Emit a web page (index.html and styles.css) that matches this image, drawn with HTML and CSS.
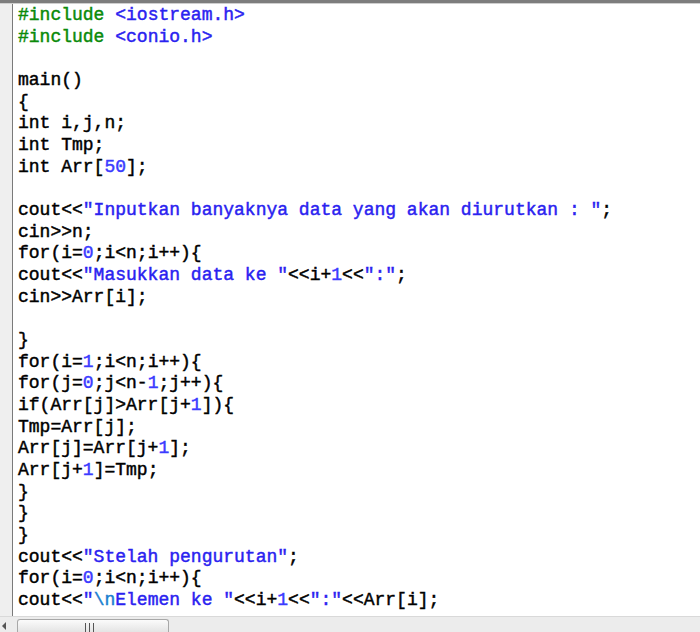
FILE: index.html
```html
<!DOCTYPE html>
<html lang="en">
<head>
    <meta charset="UTF-8">
    <title>sort.cpp</title>
    <link rel="stylesheet" href="styles.css">
</head>
<body>
    <div class="window">
        <div class="top-bar"></div>
        <div class="editor">
            <div class="gutter"></div>
            <pre class="code"><span class="pp">#include</span><span class="str"> &lt;iostream.h&gt;</span>
<span class="pp">#include</span><span class="str"> &lt;conio.h&gt;</span>

main()
{
int i,j,n;
int Tmp;
int Arr[<span class="num">50</span>];

cout&lt;&lt;<span class="str">"Inputkan banyaknya data yang akan diurutkan : "</span>;
cin&gt;&gt;n;
for(i=<span class="num">0</span>;i&lt;n;i++){
cout&lt;&lt;<span class="str">"Masukkan data ke "</span>&lt;&lt;i+<span class="num">1</span>&lt;&lt;<span class="str">":"</span>;
cin&gt;&gt;Arr[i];

}
for(i=<span class="num">1</span>;i&lt;n;i++){
for(j=<span class="num">0</span>;j&lt;n-<span class="num">1</span>;j++){
if(Arr[j]&gt;Arr[j+<span class="num">1</span>]){
Tmp=Arr[j];
Arr[j]=Arr[j+<span class="num">1</span>];
Arr[j+<span class="num">1</span>]=Tmp;
}
}
}
cout&lt;&lt;<span class="str">"Stelah pengurutan"</span>;
for(i=<span class="num">0</span>;i&lt;n;i++){
cout&lt;&lt;<span class="str">"<span class="esc">\n</span>Elemen ke "</span>&lt;&lt;i+<span class="num">1</span>&lt;&lt;<span class="str">":"</span>&lt;&lt;Arr[i];
</pre>
        </div>
        <div class="hscroll">
            <span class="arrow-left"></span>
            <div class="thumb"><span class="grip"></span></div>
        </div>
    </div>
</body>
</html>
```

FILE: styles.css
```css
html, body { margin: 0; padding: 0; background: #ffffff; }
.window { width: 700px; height: 632px; display: flex; flex-direction: column; overflow: hidden; }
.top-bar { height: 3px; background: #7d7d7d; border-bottom: 1px solid #cfcfcf; flex: none; }
.editor { flex: 1; display: flex; min-height: 0; overflow: hidden; }
.gutter { width: 12px; background: #efefef; border-right: 1px solid #7a7a7a; flex: none; }
.code {
    margin: 0;
    padding: 1px 0 0 5px;
    font-family: "Liberation Mono", "Courier New", monospace;
    font-size: 18px;
    line-height: 21.67px;
    color: #000000;
    -webkit-text-stroke: 0.45px currentColor;
    white-space: pre;
}
.pp { color: #0a8a0a; }
.str { color: #2a22f0; }
.num { color: #3b3bff; }
.esc { color: #1b7fd0; }
.hscroll {
    height: 15px;
    flex: none;
    background: #ececec;
    border-top: 1px solid #d9d9d9;
    display: flex;
    align-items: flex-end;
}
.arrow-left {
    width: 0; height: 0;
    margin: 0 0 2px 2px;
    border-top: 4px solid transparent;
    border-bottom: 4px solid transparent;
    border-right: 4px solid #555555;
}
.thumb {
    width: 150px;
    height: 12px;
    margin-left: 11px;
    background: linear-gradient(#fbfbfb, #e4e4e4);
    border: 1px solid #a8a8a8;
    border-bottom: none;
    border-radius: 3px 3px 0 0;
    display: flex;
    justify-content: center;
    align-items: flex-end;
}
.grip {
    width: 9px;
    height: 9px;
    margin-left: -7px;
    background: linear-gradient(90deg, #555 0 1px, transparent 1px 4px, #555 4px 5px, transparent 5px 8px, #555 8px 9px);
}
```
